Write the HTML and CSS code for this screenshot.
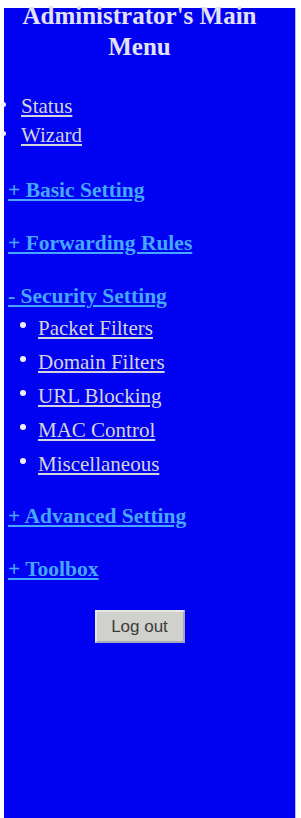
FILE: index.html
```html
<!DOCTYPE html>
<html>
<head>
<meta charset="utf-8">
<link rel="stylesheet" href="styles.css">
</head>
<body>
<div class="panel">
  <div class="inner">
    <h1 class="title">Administrator's Main Menu</h1>
    <ul class="top-list">
      <li><a href="#">Status</a></li>
      <li><a href="#">Wizard</a></li>
    </ul>
    <a class="section first" href="#">+ Basic Setting</a>
    <a class="section" href="#">+ Forwarding Rules</a>
    <a class="section" href="#">- Security Setting</a>
    <ul class="sub-list">
      <li><a href="#">Packet Filters</a></li>
      <li><a href="#">Domain Filters</a></li>
      <li><a href="#">URL Blocking</a></li>
      <li><a href="#">MAC Control</a></li>
      <li><a href="#">Miscellaneous</a></li>
    </ul>
    <a class="section after-sub" href="#">+ Advanced Setting</a>
    <a class="section" href="#">+ Toolbox</a>
    <div class="actions">
      <button class="logout" type="button">Log out</button>
    </div>
  </div>
</div>
</body>
</html>
```

FILE: styles.css
```css
html, body {
  margin: 0;
  padding: 0;
  background: #ffffff;
}

body {
  font-family: "Liberation Serif", "Times New Roman", serif;
}

.panel {
  display: flow-root;
  margin: 8px 0 0 4px;
  width: 291px;
  height: 810px;
  background: #0202f2;
  border-right: 1px solid #b8b8ff;
}

.inner {
  width: 271px;
}

.title {
  margin: -8px 0 0 0;
  font-size: 25px;
  line-height: 31px;
  font-weight: bold;
  text-align: center;
  color: #e2e2f2;
}

.top-list {
  list-style: none;
  margin: 30px 0 0 0;
  padding: 0;
  font-size: 21px;
  line-height: 29px;
}

.top-list li::before {
  content: "";
  display: inline-block;
  width: 5px;
  height: 5px;
  border-radius: 50%;
  background: #f0f0ff;
  margin: 0 15px 0 -3px;
  vertical-align: 6px;
}

.top-list a,
.sub-list a {
  color: #d4d4dc;
}

.section {
  display: block;
  width: max-content;
  margin: 27px 0 0 4px;
  font-size: 21.5px;
  line-height: 26px;
  font-weight: bold;
  color: #45a8ff;
}

.section.first {
  margin-top: 27px;
}

.section.after-sub {
  margin-top: 22px;
}

.sub-list {
  list-style: none;
  margin: 2px 0 0 0;
  padding: 0 0 0 16px;
  font-size: 21px;
  line-height: 34px;
}

.sub-list li::before {
  content: "";
  display: inline-block;
  width: 6px;
  height: 6px;
  border-radius: 50%;
  background: #f0f0ff;
  margin-right: 12px;
  vertical-align: 7px;
}

.actions {
  display: flex;
  justify-content: center;
  margin-top: 28px;
}

.logout {
  width: 90px;
  height: 33px;
  padding: 0;
  background: #d0d0cc;
  border: 2px solid #e6e6e6;
  border-right-color: #a8a8b8;
  border-bottom-color: #a8a8b8;
  color: #3c3c3c;
  font-family: "Liberation Sans", Arial, sans-serif;
  font-size: 17px;
}
```
